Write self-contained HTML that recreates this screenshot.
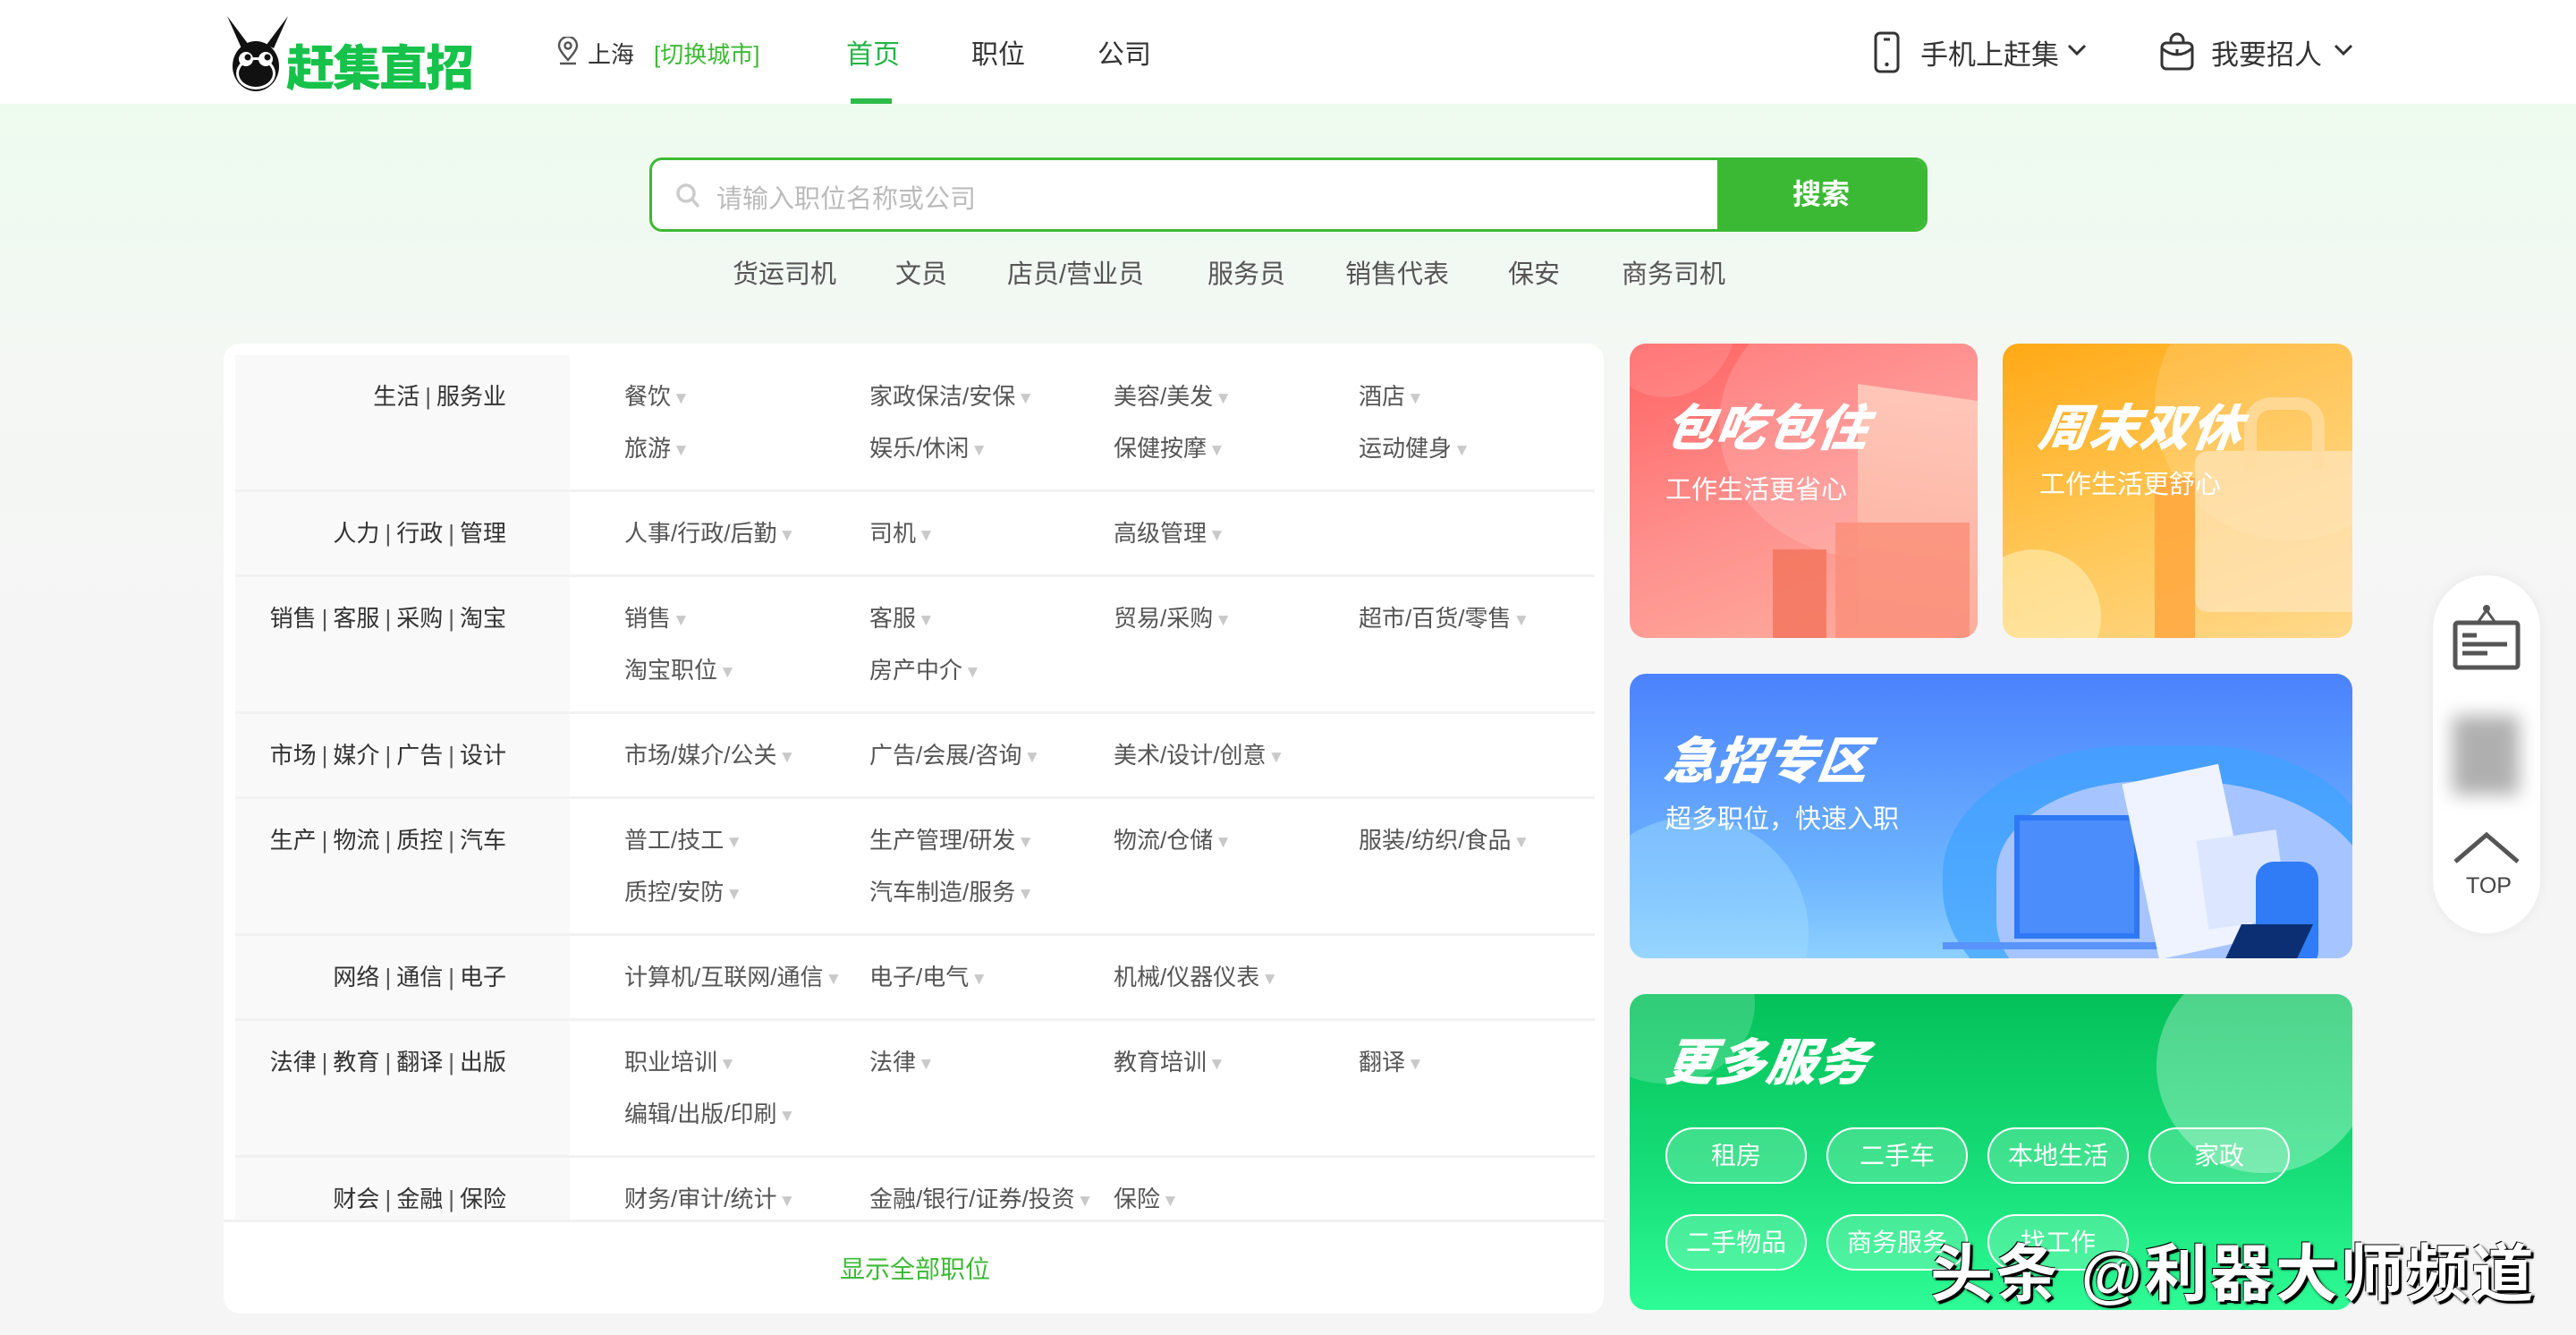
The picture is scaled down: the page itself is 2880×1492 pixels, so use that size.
<!DOCTYPE html>
<html><head><meta charset="utf-8">
<style>
*{margin:0;padding:0;box-sizing:border-box}
body{width:2880px;height:1492px;overflow:hidden;position:relative;font-family:"Liberation Sans","Noto Sans CJK SC",sans-serif;background:linear-gradient(180deg,#edfbee 116px,#f4f7f4 420px,#f5f5f5 700px);color:#333}
.abs{position:absolute}
.hdr{left:0;top:0;width:2880px;height:116px;background:#fff}
.t{white-space:nowrap}
.nav{font-size:30px;color:#333;top:36px}
.card{left:250px;top:384px;width:1543px;height:1084px;background:#fff;border-radius:18px}
.list{left:263px;top:397px;width:1520px;height:966px;overflow:hidden}
.row{display:flex;border-bottom:3px solid #f1f1f1}
.lab{width:374px;flex:none;background:#f9f9f9;text-align:right;padding:17px 71px 17px 0;font-size:26px;line-height:58px;color:#333;white-space:nowrap}
.lab i{font-style:normal;color:#555;margin:0 6px}
.items{flex:1;padding:17px 0 17px 61px;font-size:26px;line-height:58px;color:#555;display:grid;grid-template-columns:274px 273px 274px 260px;grid-auto-rows:58px;align-content:start}
.items span{white-space:nowrap;display:block;height:58px;overflow:visible}
.items span:after{content:"▼";font-size:19px;line-height:10px;color:#c9c9c9;margin-left:2px;vertical-align:1px}
.bn{border-radius:18px;overflow:hidden}
.bt{font-size:56px;font-weight:900;font-style:italic;color:#fff;letter-spacing:1px;transform:skewX(-8deg)}
.bs{font-size:29px;color:#fff}
.pill{width:158px;height:63px;border:2px solid #fff;border-radius:32px;color:#fff;font-size:28px;text-align:center;line-height:59px;background:rgba(255,255,255,.18)}
</style></head><body>
<div class="abs hdr"></div>
<svg class="abs" style="left:248px;top:16px" width="80" height="88" viewBox="0 0 80 88">
<path d="M6 2 L30 34 L22 38 Z" fill="#111"/><path d="M74 2 L50 34 L58 38 Z" fill="#111"/>
<ellipse cx="38" cy="58" rx="26" ry="28" fill="#111"/>
<ellipse cx="38" cy="66" rx="22" ry="18" fill="#fff"/>
<ellipse cx="38" cy="66" rx="19" ry="15" fill="#111"/>
<circle cx="27" cy="50" r="8" fill="#fff"/><circle cx="49" cy="50" r="8" fill="#fff"/>
<circle cx="29" cy="48" r="3.5" fill="#111"/><circle cx="51" cy="48" r="3.5" fill="#111"/>
</svg>
<div class="abs t" style="left:320px;top:32px;font-size:54px;font-weight:900;color:#16c24a;letter-spacing:-2px">赶集直招</div>
<svg class="abs" style="left:622px;top:41px" width="26" height="32" viewBox="0 0 26 32"><path d="M13 26 C5 17 3 13 3 10 A10 10 0 0 1 23 10 C23 13 21 17 13 26Z" fill="none" stroke="#555" stroke-width="2.4"/><circle cx="13" cy="10" r="3.5" fill="none" stroke="#555" stroke-width="2.4"/><path d="M4 30 H22" stroke="#555" stroke-width="2.4"/></svg>
<div class="abs t" style="left:657px;top:41px;font-size:26px;color:#333">上海</div>
<div class="abs t" style="left:731px;top:41px;font-size:26px;color:#3cb934">[切换城市]</div>
<div class="abs t nav" style="left:946px;color:#22b445">首页</div>
<div class="abs" style="left:951px;top:110px;width:46px;height:6px;background:#2dbb49"></div>
<div class="abs t nav" style="left:1086px">职位</div>
<div class="abs t nav" style="left:1227px">公司</div>
<svg class="abs" style="left:2094px;top:34px" width="34" height="50" viewBox="0 0 34 50"><rect x="3" y="3" width="25" height="43" rx="5" fill="none" stroke="#333" stroke-width="3"/><path d="M12 10 H19" stroke="#333" stroke-width="3"/><circle cx="15.5" cy="38" r="2.2" fill="#333"/></svg>
<div class="abs t" style="left:2147px;top:36px;font-size:31px;color:#333">手机上赶集</div>
<svg class="abs" style="left:2310px;top:48px" width="24" height="16" viewBox="0 0 24 16"><path d="M3 3 L12 12 L21 3" fill="none" stroke="#333" stroke-width="3"/></svg>
<svg class="abs" style="left:2414px;top:36px" width="40" height="44" viewBox="0 0 40 44"><path d="M13 12 V9 A7 7 0 0 1 27 9 V12" fill="none" stroke="#333" stroke-width="3"/><rect x="3" y="12" width="34" height="29" rx="5" fill="none" stroke="#333" stroke-width="3"/><path d="M3 18 Q20 32 37 18" fill="none" stroke="#333" stroke-width="3"/><path d="M20 19 V24" stroke="#333" stroke-width="3"/></svg>
<div class="abs t" style="left:2472px;top:36px;font-size:31px;color:#333">我要招人</div>
<svg class="abs" style="left:2608px;top:48px" width="24" height="16" viewBox="0 0 24 16"><path d="M3 3 L12 12 L21 3" fill="none" stroke="#333" stroke-width="3"/></svg>

<div class="abs" style="left:726px;top:176px;width:1429px;height:83px;border:3px solid #3cb934;border-radius:14px;background:#fff;overflow:hidden">
 <div class="abs" style="right:0;top:0;width:232px;height:100%;background:#3cb934;color:#fff;font-size:32px;font-weight:bold;text-align:center;line-height:77px">搜索</div>
</div>
<svg class="abs" style="left:755px;top:204px" width="30" height="32" viewBox="0 0 30 32"><circle cx="12" cy="12" r="9" fill="none" stroke="#ccc" stroke-width="3.5"/><path d="M19 19 L26 27" stroke="#ccc" stroke-width="3.5"/></svg>
<div class="abs t" style="left:801px;top:199px;font-size:29px;color:#bbb">请输入职位名称或公司</div>
<div class="abs t" style="top:283px;left:0;font-size:29px;color:#555">
<span class="abs" style="left:819px">货运司机</span><span class="abs" style="left:1001px">文员</span><span class="abs" style="left:1126px">店员/营业员</span><span class="abs" style="left:1350px">服务员</span><span class="abs" style="left:1504px">销售代表</span><span class="abs" style="left:1686px">保安</span><span class="abs" style="left:1813px">商务司机</span></div>

<div class="abs card"></div>
<div class="abs list">
<div class="row"><div class="lab">生活<i>|</i>服务业</div><div class="items"><span>餐饮</span><span>家政保洁/安保</span><span>美容/美发</span><span>酒店</span><span>旅游</span><span>娱乐/休闲</span><span>保健按摩</span><span>运动健身</span></div></div>
<div class="row"><div class="lab">人力<i>|</i>行政<i>|</i>管理</div><div class="items"><span>人事/行政/后勤</span><span>司机</span><span>高级管理</span></div></div>
<div class="row"><div class="lab">销售<i>|</i>客服<i>|</i>采购<i>|</i>淘宝</div><div class="items"><span>销售</span><span>客服</span><span>贸易/采购</span><span>超市/百货/零售</span><span>淘宝职位</span><span>房产中介</span></div></div>
<div class="row"><div class="lab">市场<i>|</i>媒介<i>|</i>广告<i>|</i>设计</div><div class="items"><span>市场/媒介/公关</span><span>广告/会展/咨询</span><span>美术/设计/创意</span></div></div>
<div class="row"><div class="lab">生产<i>|</i>物流<i>|</i>质控<i>|</i>汽车</div><div class="items"><span>普工/技工</span><span>生产管理/研发</span><span>物流/仓储</span><span>服装/纺织/食品</span><span>质控/安防</span><span>汽车制造/服务</span></div></div>
<div class="row"><div class="lab">网络<i>|</i>通信<i>|</i>电子</div><div class="items"><span>计算机/互联网/通信</span><span>电子/电气</span><span>机械/仪器仪表</span></div></div>
<div class="row"><div class="lab">法律<i>|</i>教育<i>|</i>翻译<i>|</i>出版</div><div class="items"><span>职业培训</span><span>法律</span><span>教育培训</span><span>翻译</span><span>编辑/出版/印刷</span></div></div>
<div class="row"><div class="lab">财会<i>|</i>金融<i>|</i>保险</div><div class="items"><span>财务/审计/统计</span><span>金融/银行/证券/投资</span><span>保险</span></div></div>
</div>
<div class="abs" style="left:250px;top:1363px;width:1543px;height:3px;background:#f1f1f1"></div>
<div class="abs t" style="left:939px;top:1397px;font-size:28px;color:#3cb934">显示全部职位</div>

<div class="abs bn" style="left:1822px;top:384px;width:389px;height:329px;background:linear-gradient(160deg,#ff6464,#fe8f8c 50%,#fdb0a0)">
 <div class="abs" style="left:-40px;top:-120px;width:160px;height:180px;border-radius:50%;background:rgba(255,255,255,.12)"></div>
 <div class="abs" style="left:100px;top:-60px;width:340px;height:300px;border-radius:50%;background:rgba(255,255,255,.15)"></div>
 <div class="abs" style="left:255px;top:55px;width:140px;height:280px;background:linear-gradient(180deg,#ffc6b8,#fbae9c);transform:skewY(8deg)"></div>
 <div class="abs" style="left:160px;top:230px;width:60px;height:120px;background:#f3735a;opacity:.8"></div>
 <div class="abs" style="left:230px;top:200px;width:150px;height:150px;background:#fa8d78;opacity:.8"></div>
</div>
<div class="abs t bt" style="left:1862px;top:434px">包吃包住</div>
<div class="abs t bs" style="left:1862px;top:524px">工作生活更省心</div>
<div class="abs bn" style="left:2239px;top:384px;width:391px;height:329px;background:linear-gradient(160deg,#ffa915,#ffc552 50%,#ffd98c)">
 <div class="abs" style="left:170px;top:-80px;width:300px;height:300px;border-radius:50%;background:rgba(255,255,255,.15)"></div>
 <div class="abs" style="left:-40px;top:230px;width:150px;height:150px;border-radius:50%;background:rgba(255,245,200,.5)"></div>
 <div class="abs" style="left:170px;top:150px;width:45px;height:200px;background:#ffa43c;opacity:.8"></div>
 <div class="abs" style="left:215px;top:120px;width:190px;height:180px;border-radius:14px;background:rgba(255,230,190,.7)"></div>
 <div class="abs" style="left:270px;top:60px;width:90px;height:80px;border:14px solid rgba(255,220,160,.8);border-bottom:none;border-radius:30px 30px 0 0"></div>
</div>
<div class="abs t bt" style="left:2280px;top:434px">周末双休</div>
<div class="abs t bs" style="left:2280px;top:518px">工作生活更舒心</div>
<div class="abs bn" style="left:1822px;top:753px;width:808px;height:318px;background:linear-gradient(180deg,#4b82fd,#6cb4ff 70%,#8dd0ff)">
 <div class="abs" style="left:-60px;top:160px;width:260px;height:260px;border-radius:50%;background:rgba(160,220,255,.45)"></div>
 <div class="abs" style="left:350px;top:80px;width:480px;height:320px;border-radius:45% 40% 0 50%;background:#3fa3ff;opacity:.7"></div>
 <div class="abs" style="left:410px;top:120px;width:420px;height:260px;border-radius:40% 50% 0 40%;background:#a6c4ff"></div>
 <div class="abs" style="left:430px;top:158px;width:140px;height:138px;background:#4a8dfb;border:6px solid #2f78f5"></div>
 <div class="abs" style="left:350px;top:300px;width:250px;height:8px;background:#5894fb"></div>
 <div class="abs" style="left:570px;top:110px;width:110px;height:200px;background:#eef3ff;transform:rotate(-12deg)"></div>
 <div class="abs" style="left:640px;top:180px;width:90px;height:100px;background:#dce7ff;transform:rotate(-8deg)"></div>
 <div class="abs" style="left:700px;top:210px;width:70px;height:120px;background:#2f7cf6;border-radius:20px"></div>
 <div class="abs" style="left:670px;top:280px;width:80px;height:60px;background:#0c2f73;transform:skewX(-25deg)"></div>
</div>
<div class="abs t bt" style="left:1862px;top:806px">急招专区</div>
<div class="abs t bs" style="left:1862px;top:892px">超多职位，快速入职</div>
<div class="abs bn" style="left:1822px;top:1111px;width:808px;height:353px;background:linear-gradient(180deg,#04c159,#18e07a 60%,#2efc95)">
 <div class="abs" style="left:-60px;top:-80px;width:200px;height:180px;border-radius:50%;background:rgba(255,255,255,.18)"></div>
 <div class="abs" style="left:589px;top:-40px;width:240px;height:240px;border-radius:50%;background:rgba(255,255,255,.3)"></div>
</div>
<div class="abs t bt" style="left:1862px;top:1143px">更多服务</div>
<div class="abs pill" style="left:1862px;top:1260px">租房</div>
<div class="abs pill" style="left:2042px;top:1260px">二手车</div>
<div class="abs pill" style="left:2222px;top:1260px">本地生活</div>
<div class="abs pill" style="left:2402px;top:1260px">家政</div>
<div class="abs pill" style="left:1862px;top:1357px">二手物品</div>
<div class="abs pill" style="left:2042px;top:1357px">商务服务</div>
<div class="abs pill" style="left:2222px;top:1357px">找工作</div>

<div class="abs" style="left:2720px;top:643px;width:120px;height:400px;border-radius:60px;background:#fff;box-shadow:0 0 14px rgba(0,0,0,.06)"></div>
<svg class="abs" style="left:2741px;top:674px" width="78" height="80" viewBox="0 0 78 80"><circle cx="39" cy="6" r="4" fill="#555"/><path d="M39 8 L29 22 M39 8 L49 22" stroke="#555" stroke-width="3" fill="none"/><rect x="4" y="22" width="70" height="50" rx="3" fill="none" stroke="#555" stroke-width="5"/><path d="M12 36 H28 M12 46 H62 M12 56 H40" stroke="#555" stroke-width="5"/></svg>
<div class="abs" style="left:2742px;top:800px;width:74px;height:88px;background:#9c9c9c;filter:blur(10px);opacity:.8"></div>
<svg class="abs" style="left:2741px;top:925px" width="78" height="42" viewBox="0 0 78 42"><path d="M4 38 L39 8 L74 38" fill="none" stroke="#555" stroke-width="5"/></svg>
<div class="abs t" style="left:2757px;top:976px;font-size:25px;color:#444">TOP</div>

<div class="abs t" style="left:2158px;top:1368px;font-size:70px;letter-spacing:3px;color:#fff;font-weight:bold;text-shadow:3px 3px 0 #000,-1px -1px 0 #000,2px 2px 3px #000">头条 @利器大师频道</div>
</body></html>
